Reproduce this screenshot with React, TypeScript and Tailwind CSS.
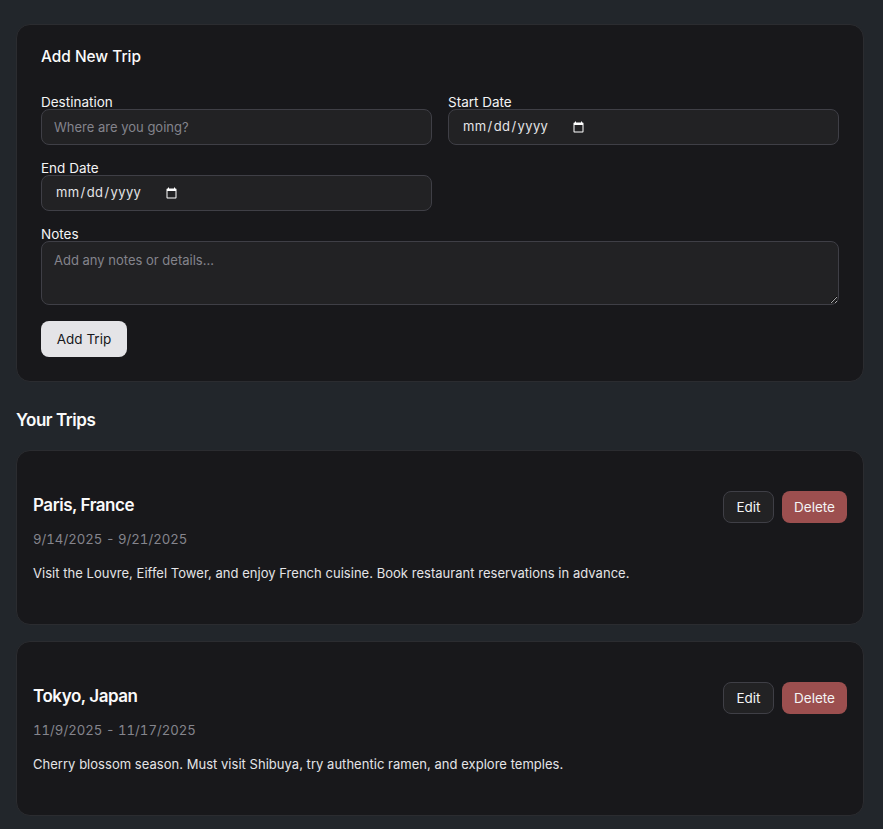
export default function App() {
  const trips = [
    { t: "Paris, France", d: "9/14/2025 - 9/21/2025", n: "Visit the Louvre, Eiffel Tower, and enjoy French cuisine. Book restaurant reservations in advance." },
    { t: "Tokyo, Japan", d: "11/9/2025 - 11/17/2025", n: "Cherry blossom season. Must visit Shibuya, try authentic ramen, and explore temples." },
  ];
  const font = { fontFamily: "Inter, 'Noto Sans', sans-serif" };
  const input = "h-9 w-full rounded-lg border border-[#3f3f46] bg-[#222224] px-[12px] text-[13px] text-[#e4e4e7] outline-none placeholder:text-[#84848c]";
  const DateInput = () => (
    <div className="flex h-9 w-full items-center rounded-lg border border-[#3f3f46] bg-[#222224] pl-[13px]">
      <input type="date" aria-label="date" className="w-[125px] bg-transparent text-[13px] tracking-[0.4px] text-[#e4e4e7] outline-none [color-scheme:dark]" />
    </div>
  );
  const Label = ({ children }: { children: React.ReactNode }) => (
    <label className="block text-[13.5px] leading-[14px] font-normal text-[#f4f4f5]">{children}</label>
  );
  return (
    <div className="min-h-[829px] bg-[#22262b] pt-6 pl-4 pr-[19px] pb-3" style={font}>
      <div className="rounded-[14px] border border-[#2b2c30] bg-[#18181b] px-6 pt-6 pb-6">
        <h2 className="mb-[30px] text-[15.4px] leading-4 font-medium text-[#fafafa]">Add New Trip</h2>
        <div className="grid grid-cols-2 gap-x-4 gap-y-4">
          <div>
            <Label>Destination</Label>
            <input className={input} placeholder="Where are you going?" />
          </div>
          <div>
            <Label>Start Date</Label>
            <DateInput />
          </div>
          <div>
            <Label>End Date</Label>
            <DateInput />
          </div>
          <div />
          <div className="col-span-2">
            <Label>Notes</Label>
            <textarea className="block h-16 w-full rounded-lg border border-[#3f3f46] bg-[#222224] px-[12px] py-[8px] text-[13px] leading-5 text-[#e4e4e7] outline-none placeholder:text-[#84848c]" placeholder="Add any notes or details..." />
          </div>
        </div>
        <button className="mt-4 h-9 w-[86px] rounded-lg bg-[#e4e4e7] text-[13.5px] font-normal text-[#18181b]">Add Trip</button>
      </div>
      <h2 className="mt-6 mb-4 text-[17px] leading-7 font-semibold tracking-[-0.45px] text-[#fafafa]">Your Trips</h2>
      <div className="flex flex-col gap-4">
        {trips.map((x) => (
          <div key={x.t} className="rounded-[14px] border border-[#2b2c30] bg-[#18181b] px-4 pt-[40px] pb-[41px]">
            <div className="flex items-start justify-between">
              <h3 className="text-[17px] leading-7 font-semibold tracking-[-0.45px] text-[#fafafa]">{x.t}</h3>
              <div className="flex gap-2">
                <button className="h-8 w-[51px] rounded-lg border border-[#3f3f46] bg-[#222224] pt-px text-[13.5px] font-normal text-[#f4f4f5]">Edit</button>
                <button className="h-8 w-[65px] rounded-lg bg-[#9c4f4f] pt-px text-[13.5px] font-normal text-[#f4f4f5]">Delete</button>
              </div>
            </div>
            <p className="mt-[6px] text-[13.2px] leading-5 tabular-nums text-[#85858d]">{x.d}</p>
            <p className="mt-[14px] text-[13px] leading-5 tracking-[0.03px] text-[#e4e4e7]">{x.n}</p>
          </div>
        ))}
      </div>
    </div>
  );
}
